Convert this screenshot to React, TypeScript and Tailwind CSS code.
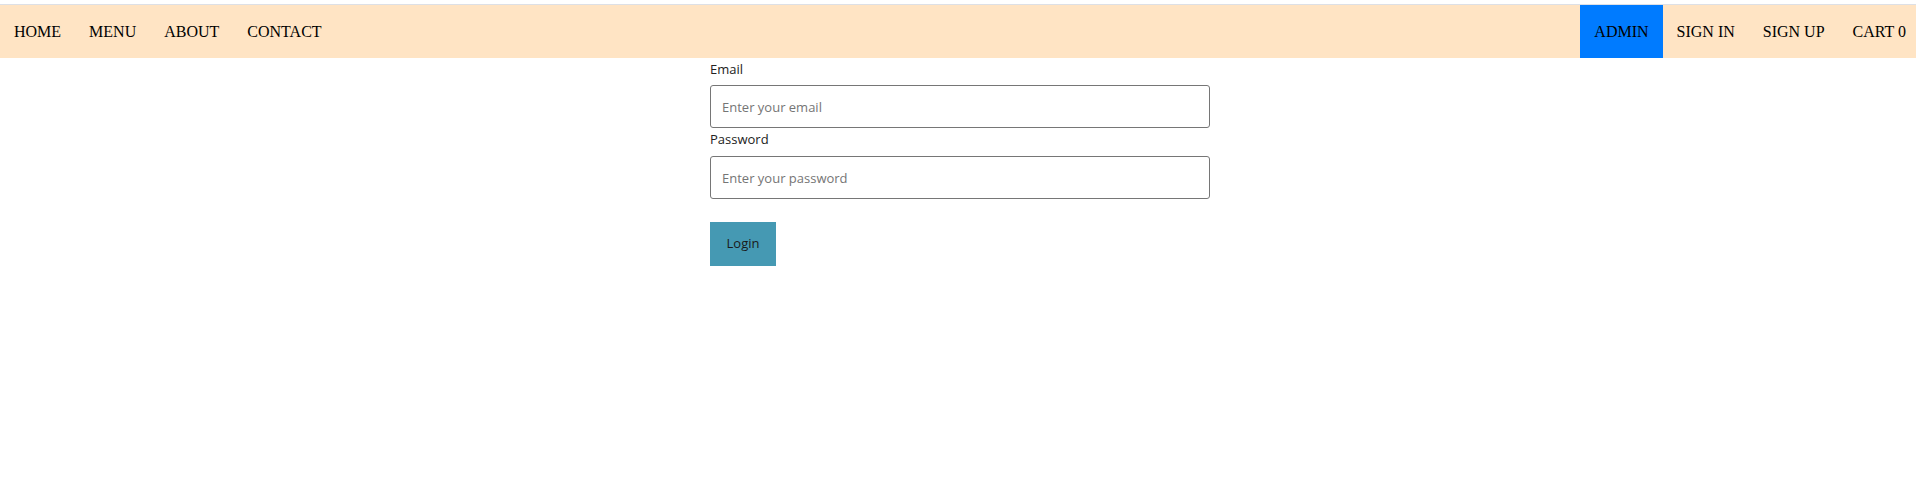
import { useState } from 'react'

const leftLinks = ['HOME', 'MENU', 'ABOUT', 'CONTACT']

function NavBar() {
  return (
    <nav className="mt-[4px] border-t border-[#dde0e6] bg-[#ffe4c4] h-[54px] flex items-stretch justify-between font-['Liberation_Serif',serif] text-[16px] text-black">
      <ul className="flex items-stretch">
        {leftLinks.map((l) => (
          <li key={l} className="px-[14px] flex items-center">
            {l}
          </li>
        ))}
      </ul>
      <ul className="flex items-stretch pr-[10px]">
        <li className="px-[14px] flex items-center bg-[#007bff]">ADMIN</li>
        <li className="px-[14px] flex items-center">SIGN IN</li>
        <li className="px-[14px] flex items-center">SIGN UP</li>
        <li className="pl-[14px] flex items-center">CART 0</li>
      </ul>
    </nav>
  )
}

export default function App() {
  const [email, setEmail] = useState('')
  const [password, setPassword] = useState('')

  return (
    <div className="min-h-[495px] bg-white">
      <NavBar />
      <form
        className="w-[500px] ml-[710px] font-['Open_Sans','Noto_Sans',sans-serif] text-[13px] text-[#222]"
        onSubmit={(e) => e.preventDefault()}
      >
        <label className="block leading-[17px] pt-[3px] mb-[7px]">Email</label>
        <input
          type="email"
          value={email}
          onChange={(e) => setEmail(e.target.value)}
          placeholder="Enter your email"
          className="block w-full h-[43px] px-[11px] border border-[#767676] rounded-[3px] outline-none placeholder:text-[#757575]"
        />
        <label className="block leading-[17px] pt-[3px] mb-[8px]">Password</label>
        <input
          type="password"
          value={password}
          onChange={(e) => setPassword(e.target.value)}
          placeholder="Enter your password"
          className="block w-full h-[43px] px-[11px] border border-[#767676] rounded-[3px] outline-none placeholder:text-[#757575]"
        />
        <button
          type="submit"
          className="block mt-[23px] w-[66px] h-[44px] bg-[#4599b3] text-[#1a1a1a]"
        >
          Login
        </button>
      </form>
    </div>
  )
}
